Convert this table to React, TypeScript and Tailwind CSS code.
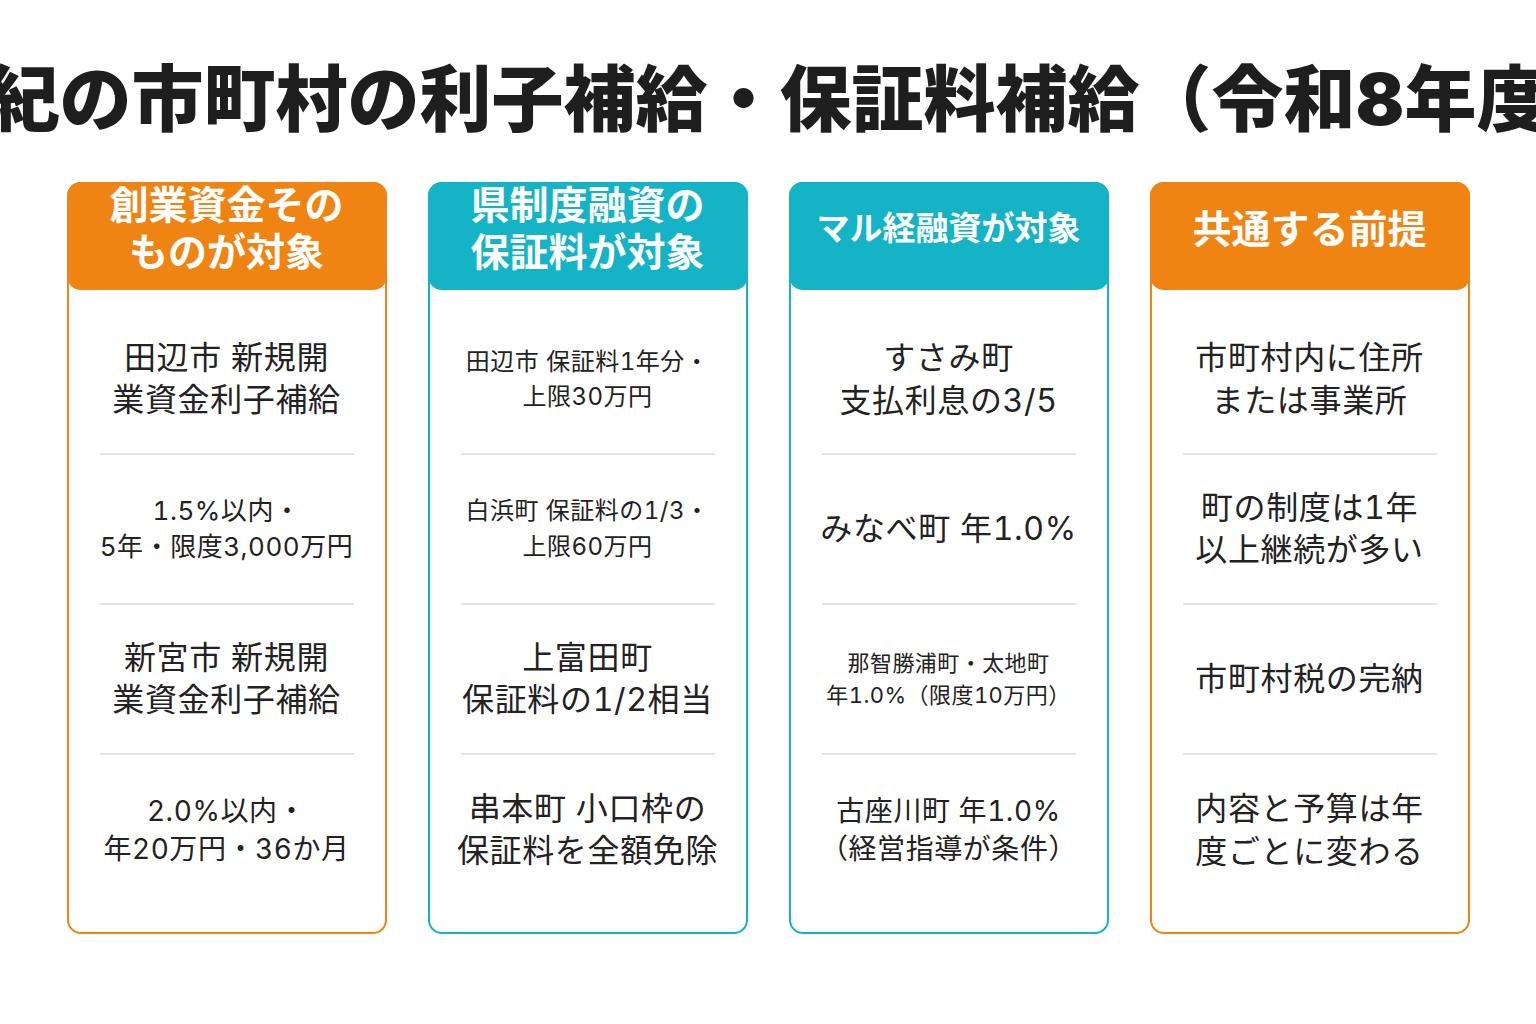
const ORANGE = 'orange'
const TEAL = 'teal'

type Row = { lines: string[]; size: string }
type Column = { title: string[]; titleSize: string; color: string; rows: Row[] }

const columns: Column[] = [
    {
        title: ['創業資金その', 'ものが対象'],
        titleSize: 'text-[39px] leading-[47px]',
        color: ORANGE,
        rows: [
            { lines: ['田辺市 新規開', '業資金利子補給'], size: 'text-[32px] leading-[42px]' },
            { lines: ['1.5%以内・', '5年・限度3,000万円'], size: 'text-[26px] leading-[36px]' },
            { lines: ['新宮市 新規開', '業資金利子補給'], size: 'text-[32px] leading-[42px]' },
            { lines: ['2.0%以内・', '年20万円・36か月'], size: 'text-[28px] leading-[38px]' },
        ],
    },
    {
        title: ['県制度融資の', '保証料が対象'],
        titleSize: 'text-[39px] leading-[47px]',
        color: TEAL,
        rows: [
            { lines: ['田辺市 保証料1年分・', '上限30万円'], size: 'text-[24px] leading-[35px]' },
            { lines: ['白浜町 保証料の1/3・', '上限60万円'], size: 'text-[24px] leading-[36px]' },
            { lines: ['上富田町', '保証料の1/2相当'], size: 'text-[32px] leading-[42px]' },
            { lines: ['串本町 小口枠の', '保証料を全額免除'], size: 'text-[32px] leading-[42px]' },
        ],
    },
    {
        title: ['マル経融資が対象'],
        titleSize: 'text-[33px] leading-[47px]',
        color: TEAL,
        rows: [
            { lines: ['すさみ町', '支払利息の3/5'], size: 'text-[32px] leading-[43px]' },
            { lines: ['みなべ町 年1.0%'], size: 'text-[32px] leading-[42px]' },
            { lines: ['那智勝浦町・太地町', '年1.0%（限度10万円）'], size: 'text-[22px] leading-[32px]' },
            { lines: ['古座川町 年1.0%', '（経営指導が条件）'], size: 'text-[28px] leading-[38px]' },
        ],
    },
    {
        title: ['共通する前提'],
        titleSize: 'text-[39px] leading-[47px]',
        color: ORANGE,
        rows: [
            { lines: ['市町村内に住所', 'または事業所'], size: 'text-[32px] leading-[43px]' },
            { lines: ['町の制度は1年', '以上継続が多い'], size: 'text-[32px] leading-[42px]' },
            { lines: ['市町村税の完納'], size: 'text-[32px] leading-[42px]' },
            { lines: ['内容と予算は年', '度ごとに変わる'], size: 'text-[32px] leading-[43px]' },
        ],
    },
]

const Card = ({ col }: { col: Column }) => {
    const isOrange = col.color === ORANGE
    return (
        <div
            className={
                isOrange
                    ? 'w-[320px] h-[752px] flex flex-col rounded-[14px] border-2 border-[#ef8412] bg-white'
                    : 'w-[320px] h-[752px] flex flex-col rounded-[14px] border-2 border-[#14b4c6] bg-white'
            }
        >
            <div
                className={
                    isOrange
                        ? '-mx-[2px] -mt-[2px] h-[108px] pb-[16px] shrink-0 rounded-[14px] bg-[#ef8412] flex flex-col items-center justify-center text-white font-bold'
                        : '-mx-[2px] -mt-[2px] h-[108px] pb-[16px] shrink-0 rounded-[14px] bg-[#14b4c6] flex flex-col items-center justify-center text-white font-bold'
                }
            >
                {col.title.map((t) => (
                    <span key={t} className={col.titleSize + ' whitespace-nowrap'}>
                        {t}
                    </span>
                ))}
            </div>
            <div className="flex flex-col px-[31px] pt-[15px]">
                {col.rows.map((row, i) => (
                    <div
                        key={i}
                        className={
                            i < 3
                                ? 'h-[150px] flex flex-col items-center justify-center text-center text-[#222] border-b-2 border-[#e0e5e9]'
                                : 'h-[150px] flex flex-col items-center justify-center text-center text-[#222]'
                        }
                    >
                        {row.lines.map((l) => (
                            <span key={l} className={row.size + ' whitespace-nowrap tabular-nums tracking-[0.02em]'}>
                                {l}
                            </span>
                        ))}
                    </div>
                ))}
            </div>
        </div>
    )
}

const App = () => {
    return (
        <main
            className="w-[1536px] h-[1024px] bg-white overflow-hidden flex flex-col items-center"
            style={{ fontFamily: 'Inter, "Noto Sans CJK JP", sans-serif' }}
        >
            <div className="w-full flex justify-center pt-[53px] h-[182px]">
                <h1 className="text-[72px] leading-[92px] font-black text-[#1e1e1e] whitespace-nowrap">
                    南紀の市町村の利子補給・保証料補給（令和8年度）
                </h1>
            </div>
            <div className="flex flex-row gap-[41px]">
                {columns.map((c) => (
                    <Card key={c.title[0]} col={c} />
                ))}
            </div>
        </main>
    )
}

export default App
